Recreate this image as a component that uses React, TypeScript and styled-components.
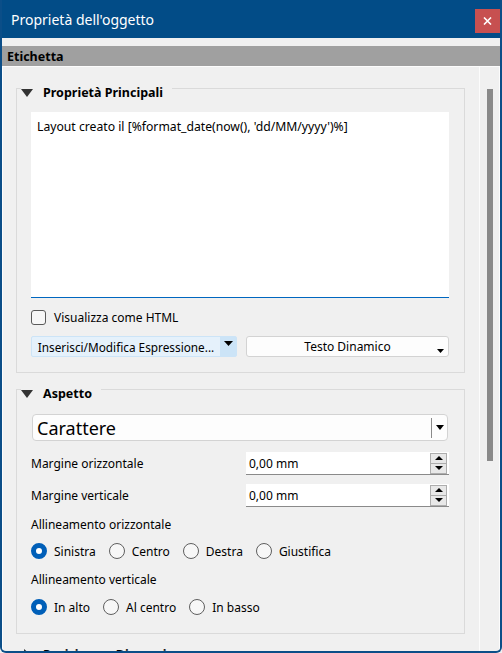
import React from "react";
import styled, { createGlobalStyle } from "styled-components";

const GlobalStyle = createGlobalStyle`
  html, body {
    margin: 0;
    padding: 0;
    background: #f0f0f0;
  }
  body {
    font-family: "Noto Sans", "Open Sans", sans-serif;
    font-size: 12px;
    color: #000;
  }
  * {
    box-sizing: border-box;
  }
`;

const Window = styled.div`
  width: 502px;
  height: 653px;
  display: flex;
  flex-direction: column;
  background: #f0f0f0;
  border: 2px solid #0b4e88;
  border-top: none;
  border-radius: 0 0 6px 6px;
  overflow: hidden;
`;

const TitleBar = styled.div`
  flex-shrink: 0;
  height: 38px;
  margin: 0 -2px;
  padding: 0 2px 0 11px;
  display: flex;
  align-items: center;
  background: #024c87;
  color: #fff;
  font-size: 14px;
`;

const Title = styled.span`
  flex: 1;
`;

const CloseButton = styled.button`
  width: 25px;
  height: 24px;
  border: none;
  padding: 0;
  margin-top: 4px;
  background: #c75050;
  display: flex;
  align-items: center;
  justify-content: center;
`;

const Band = styled.div`
  flex-shrink: 0;
  margin-top: 8px;
  height: 20px;
  padding-left: 5px;
  display: flex;
  align-items: center;
  background: #a0a0a0;
  font-weight: 700;
  font-size: 12.5px;
`;

const Body = styled.div`
  flex: 1;
  min-height: 0;
  display: flex;
  border-top: 1px solid #fcfcfc;
  border-left: 1px solid #fcfcfc;
  overflow: hidden;
`;

const Viewport = styled.div`
  flex: 1;
  padding: 9px 14px 0 13px;
  border-right: 1px solid #fcfcfc;
  overflow: hidden;
`;

const ScrollBar = styled.div`
  width: 20px;
  flex-shrink: 0;
  border-right: 1px solid #fcfcfc;
`;

const Thumb = styled.div`
  width: 6px;
  height: 372px;
  margin: 22px 0 0 7px;
  background: #8a8a8a;
`;

const Group = styled.fieldset<{ $top?: number; $collapsed?: boolean }>`
  margin: ${(p) => p.$top ?? 0}px 0 0;
  min-inline-size: auto;
  border: 1px solid ${(p) => (p.$collapsed ? "transparent" : "#dadada")};
  padding: 11px 15px 15px 14px;
  display: flex;
  flex-direction: column;
`;

const Legend = styled.legend`
  display: flex;
  align-items: center;
  gap: 10px;
  margin-left: -10px;
  padding: 8px 9px 0 0;
  font-weight: 700;
  font-size: 12.5px;
  line-height: 17px;
`;

const TextEdit = styled.textarea`
  display: block;
  width: 100%;
  height: 186px;
  margin: 0;
  padding: 6px;
  border: none;
  border-bottom: 1px solid #0067c0;
  background: #fff;
  font-family: inherit;
  font-size: 12.2px;
  line-height: 17px;
  color: #000;
  resize: none;
  outline: none;
`;

const CheckRow = styled.label`
  margin-top: 12px;
  height: 15px;
  display: flex;
  align-items: center;
  gap: 8px;
`;

const CheckBox = styled.span`
  width: 15px;
  height: 15px;
  border: 1px solid #5a5a5a;
  border-radius: 3px;
  background: #f7f7f7;
`;

const ButtonRow = styled.div`
  margin-top: 11px;
  height: 21px;
  display: flex;
  gap: 9px;
`;

const SplitButton = styled.div`
  width: 206px;
  display: flex;
  border: 1px solid #cce4f7;
  border-radius: 2px;
  background: #e5f1fb;
`;

const SplitMain = styled.span`
  flex: 1;
  display: flex;
  align-items: center;
  justify-content: center;
  font-size: 11.8px;
`;

const SplitArrow = styled.span`
  width: 16px;
  display: flex;
  align-items: flex-start;
  justify-content: center;
  padding-top: 4px;
  background: #cce4f7;
`;

const MenuButton = styled.div`
  position: relative;
  flex: 1;
  display: flex;
  align-items: center;
  justify-content: center;
  background: #fdfdfd;
  border: 1px solid #d3d3d3;
  border-radius: 3px;
`;

const MenuMark = styled.span`
  position: absolute;
  right: 4px;
  bottom: 3px;
  display: flex;
`;

const Combo = styled.div`
  height: 27px;
  margin: 0 1px;
  display: flex;
  align-items: center;
  background: #fdfdfd;
  border: 1px solid #d3d3d3;
  border-radius: 4px;
  font-size: 18px;
`;

const ComboText = styled.span`
  flex: 1;
  padding-left: 4px;
`;

const ComboSep = styled.span`
  width: 1px;
  height: 20px;
  background: #8a8a8a;
`;

const ComboArrow = styled.span`
  width: 15px;
  display: flex;
  justify-content: center;
`;

const FieldRow = styled.div<{ $top: number }>`
  margin-top: ${(p) => p.$top}px;
  height: 23px;
  display: flex;
  align-items: center;
`;

const FieldLabel = styled.span`
  flex: 1;
`;

const SpinBox = styled.div`
  width: 203px;
  height: 23px;
  display: flex;
  align-items: center;
  padding-left: 3px;
  background: #fff;
  border-bottom: 1px solid #8a8a8a;
`;

const SpinValue = styled.span`
  flex: 1;
`;

const SpinButtons = styled.div`
  width: 17px;
  height: 21px;
  margin-right: 2px;
  display: flex;
  flex-direction: column;
`;

const SpinStep = styled.span`
  flex: 1;
  display: flex;
  align-items: center;
  justify-content: center;
  border: 1px solid #adadad;
  background: #e8e8e8;
  & + & {
    border-top: none;
  }
`;

const Caption = styled.div<{ $top: number }>`
  margin-top: ${(p) => p.$top}px;
  height: 17px;
  line-height: 17px;
`;

const RadioRow = styled.div<{ $top: number }>`
  margin-top: ${(p) => p.$top}px;
  height: 16px;
  display: flex;
  gap: 13px;
`;

const RadioItem = styled.label`
  display: flex;
  align-items: center;
  gap: 7px;
`;

const RadioDot = styled.span<{ $checked?: boolean }>`
  width: 16px;
  height: 16px;
  border-radius: 50%;
  background: ${(p) => (p.$checked ? "#fff" : "#f7f7f7")};
  border: ${(p) => (p.$checked ? "5px solid #005fb8" : "1px solid #5f5f5f")};
`;

const Caret = styled.span`
  width: 12px;
  display: flex;
  justify-content: center;
  color: #333;
`;

function Triangle({ dir, w, h }: { dir: "down" | "up" | "right"; w: number; h: number }) {
  const points =
    dir === "down"
      ? `0,0 ${w},0 ${w / 2},${h}`
      : dir === "up"
      ? `0,${h} ${w},${h} ${w / 2},0`
      : `0,0 ${w},${h / 2} 0,${h}`;
  return (
    <svg width={w} height={h} viewBox={`0 0 ${w} ${h}`}>
      <polygon points={points} fill="currentColor" />
    </svg>
  );
}

function GroupTitle({ open, children }: { open: boolean; children: React.ReactNode }) {
  return (
    <Legend>
      <Caret>{open ? <Triangle dir="down" w={12} h={8} /> : <Triangle dir="right" w={7} h={12} />}</Caret>
      {children}
    </Legend>
  );
}

function Spin({ value }: { value: string }) {
  return (
    <SpinBox>
      <SpinValue>{value}</SpinValue>
      <SpinButtons>
        <SpinStep>
          <Triangle dir="up" w={8} h={4} />
        </SpinStep>
        <SpinStep>
          <Triangle dir="down" w={8} h={4} />
        </SpinStep>
      </SpinButtons>
    </SpinBox>
  );
}

function Radios({ top, options, selected }: { top: number; options: string[]; selected: number }) {
  return (
    <RadioRow $top={top}>
      {options.map((o, i) => (
        <RadioItem key={o}>
          <RadioDot $checked={i === selected} />
          {o}
        </RadioItem>
      ))}
    </RadioRow>
  );
}

export default function App() {
  return (
    <>
      <GlobalStyle />
      <Window>
        <TitleBar>
          <Title>Proprietà dell'oggetto</Title>
          <CloseButton aria-label="Chiudi">
            <svg width="9" height="8" viewBox="0 0 9 8">
              <path d="M1 0.5 L8 7.5 M8 0.5 L1 7.5" stroke="#fff" strokeWidth="1.6" />
            </svg>
          </CloseButton>
        </TitleBar>
        <Band>Etichetta</Band>
        <Body>
          <Viewport>
            <Group>
              <GroupTitle open>Proprietà Principali</GroupTitle>
              <TextEdit readOnly defaultValue="Layout creato il [%format_date(now(), 'dd/MM/yyyy')%]" />
              <CheckRow>
                <CheckBox />
                Visualizza come HTML
              </CheckRow>
              <ButtonRow>
                <SplitButton>
                  <SplitMain>Inserisci/Modifica Espressione...</SplitMain>
                  <SplitArrow>
                    <Triangle dir="down" w={9} h={5} />
                  </SplitArrow>
                </SplitButton>
                <MenuButton>
                  Testo Dinamico
                  <MenuMark>
                    <Triangle dir="down" w={7} h={4} />
                  </MenuMark>
                </MenuButton>
              </ButtonRow>
            </Group>
            <Group $top={4} style={{ paddingTop: 12, paddingBottom: 18 }}>
              <GroupTitle open>Aspetto</GroupTitle>
              <Combo>
                <ComboText>Carattere</ComboText>
                <ComboSep />
                <ComboArrow>
                  <Triangle dir="down" w={8} h={5} />
                </ComboArrow>
              </Combo>
              <FieldRow $top={11}>
                <FieldLabel>Margine orizzontale</FieldLabel>
                <Spin value="0,00 mm" />
              </FieldRow>
              <FieldRow $top={9}>
                <FieldLabel>Margine verticale</FieldLabel>
                <Spin value="0,00 mm" />
              </FieldRow>
              <Caption $top={9}>Allineamento orizzontale</Caption>
              <Radios top={10} options={["Sinistra", "Centro", "Destra", "Giustifica"]} selected={0} />
              <Caption $top={12}>Allineamento verticale</Caption>
              <Radios top={11} options={["In alto", "Al centro", "In basso"]} selected={0} />
            </Group>
            <Group $top={4} $collapsed>
              <GroupTitle open={false}>Posizione e Dimensione</GroupTitle>
            </Group>
          </Viewport>
          <ScrollBar>
            <Thumb />
          </ScrollBar>
        </Body>
      </Window>
    </>
  );
}
